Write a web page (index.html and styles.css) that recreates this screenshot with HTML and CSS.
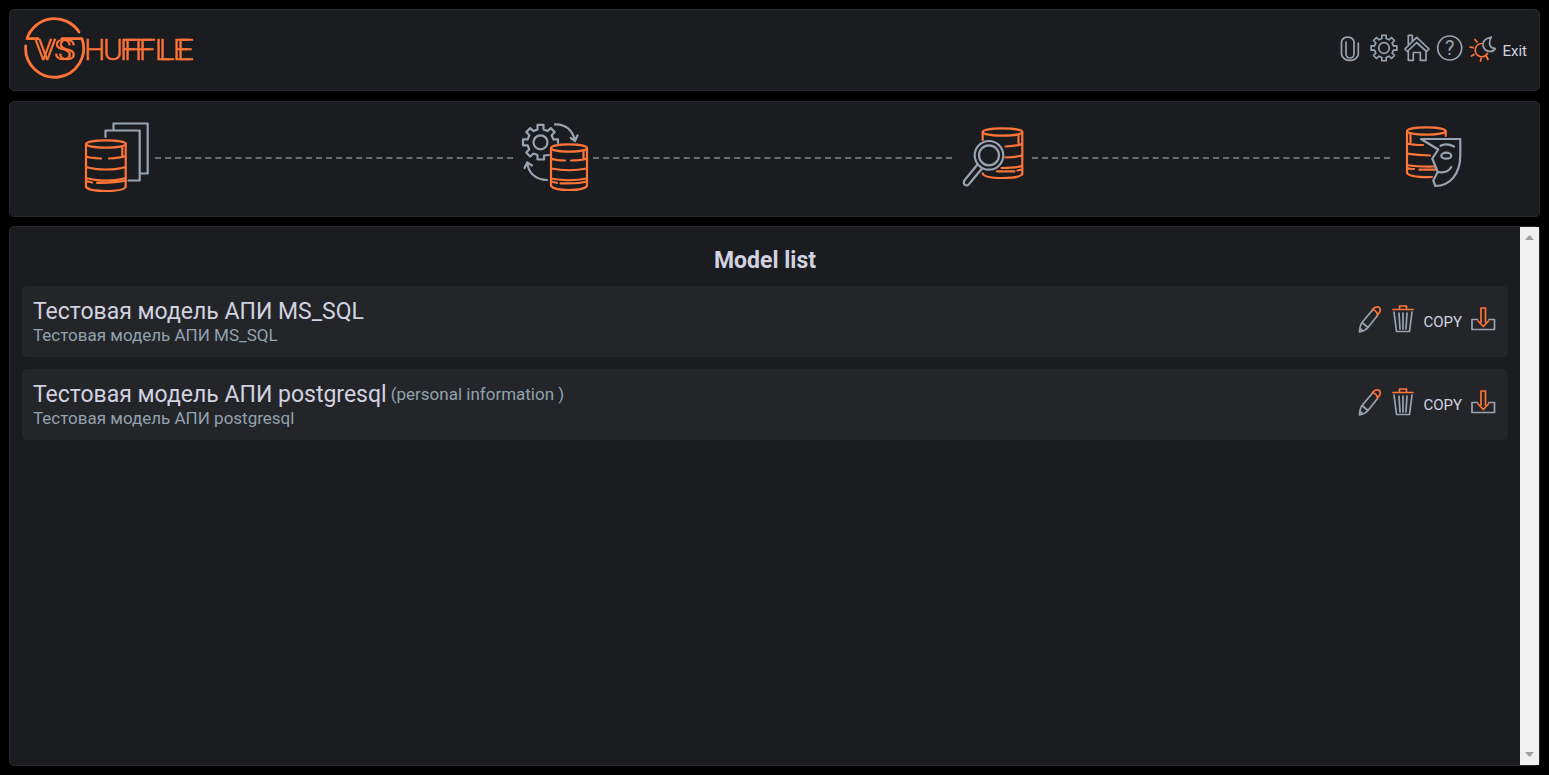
FILE: index.html
```html
<!DOCTYPE html>
<html lang="en">
<head>
<meta charset="utf-8">
<title>VSHUFFLE</title>
<meta name="viewport" content="width=device-width, initial-scale=1">
<link rel="stylesheet" href="styles.css">
</head>
<body>
<svg width="0" height="0" class="defs" aria-hidden="true">
  <defs>
    <path id="gear" d="M-3 -17.5H3V-12.9L7 -11.2L10.3 -14.4L14.4 -10.3L11.2 -7L12.9 -3H17.5V3H12.9L11.2 7L14.4 10.3L10.3 14.4L7 11.2L3 12.9V17.5H-3V12.9L-7 11.2L-10.3 14.4L-14.4 10.3L-11.2 7L-12.9 3H-17.5V-3H-12.9L-11.2 -7L-14.4 -10.3L-10.3 -14.4L-7 -11.2L-3 -12.9Z"/>
    <symbol id="pencil" viewBox="0 0 26 30">
      <path class="g" d="M16 5.500L5 18.500Q3 21 2.500 28Q8 27 11 23.500L20.500 11.500M5 18.500Q8 21 11 23.500M3 24.500L6 26.800"/>
      <path class="o" d="M15.500 5.500Q18 2.300 21.500 3Q24.500 5 22.500 8.500L20.500 11Q20 7 15.500 5.500"/>
    </symbol>
    <symbol id="trash" viewBox="0 0 22 30">
      <path class="g" d="M2 8L4.500 27.500H17.500L20 8M7 9L8 25M11 9V25M15 9L14 25"/>
      <path class="o" d="M1 5.500H21M7.500 5V2H14.500V5"/>
    </symbol>
    <symbol id="download" viewBox="0 0 26 30">
      <path class="g" d="M6.500 15.500H1V25.500H23.500V15.500H18"/>
      <path class="o" d="M10 18V4H14.500V18M7 17L12.300 22.500L17.500 17"/>
    </symbol>
  </defs>
</svg>

<header class="panel header">
  <a class="logo" href="#" aria-label="VSHUFFLE">
    <svg width="174" height="64" viewBox="22 15 174 64">
      <path class="ring" d="M38 38.700H27A29 29 0 0 1 79 32M62 38.700H82A29 29 0 1 1 25.700 46"/>
      <g class="wordmark">
        <text class="double" y="60" x="34 54">VS</text>
        <text y="60" x="84 103">HU</text>
        <text class="double" y="60" x="120 135">FF</text>
        <text class="double" y="60" x="155 173">LE</text>
      </g>
    </svg>
  </a>
  <nav class="tools">
    <button class="tool" aria-label="Attachments"><svg width="29" height="30" viewBox="1336 33 29 30"><path class="g" d="M1358.300 43V54.500A8.500 7 0 0 1 1341.500 54.500V41.500A6.500 6 0 0 1 1354 41.500V54A4 4 0 0 1 1346 54V42"/></svg></button>
    <button class="tool" aria-label="Settings"><svg width="31" height="30" viewBox="-15 -15 31 30"><use class="g" href="#gear" transform="scale(.73)"/><circle class="g" r="5.300"/></svg></button>
    <button class="tool" aria-label="Home"><svg width="28" height="30" viewBox="1404 33 28 30"><path class="g" d="M1404.900 49L1416.700 37.300L1429 49L1426.500 51.500L1416.700 42.500L1407.300 51.500ZM1408.300 45V35.300H1412.300V41M1408.300 51V60.300H1413.300V52.500H1420.300V60.300H1426V51"/></svg></button>
    <button class="tool" aria-label="Help"><svg width="28" height="30" viewBox="1436 33 28 30"><circle class="g" cx="1449.700" cy="48" r="12"/><text class="mark" x="1449.700" y="55">?</text></svg></button>
    <button class="tool" aria-label="Theme"><svg width="30" height="30" viewBox="1468 33 30 30"><path class="o" d="M1482 43.500A6.600 6.600 0 1 0 1487.500 53.500M1475 39.500L1477 42M1470 47L1473 47.700M1471.500 56L1474 54.500M1480.500 61L1481.100 58.500M1488 59.500L1486.500 56.500"/><path class="g" d="M1491.300 37Q1482.500 39 1483 45.500C1484.500 52.500 1493 53 1495.300 48.500Q1486.500 47.500 1491.300 37Z"/></svg></button>
    <a class="exit" href="#">Exit</a>
  </nav>
</header>

<nav class="panel steps" aria-label="Steps">
  <svg class="step" width="80" height="82" viewBox="75 117 80 82">
    <path class="g" d="M113.500 130V123.500H147.700V173.500H141M105.500 137V130.500H139.700V180.500H128.500"/>
    <path class="o" d="M86 144V187Q89 191 106 191T125.700 187V144M86 156.500Q90 158 101 158.500M109 158.500Q120 158 125.700 156M86 167Q94 169.500 106 169.500T125.700 167M86 178Q94 180.500 106 180.500T125.700 178M86 181L92 182.500M97 182.800Q116 183 125.700 180.500M122.300 147V155.500"/>
    <ellipse class="o" cx="106" cy="144" rx="19.800" ry="3.600"/>
  </svg>
  <span class="line"></span>
  <svg class="step" width="80" height="82" viewBox="513 117 80 82">
    <path class="g" d="M549 155L544 155.500V159.500H537.500V155L533.500 153.500L530.200 156.500L526.300 152.600L529.300 149.300L527.700 145.300H523V139.300H527.700L529.300 135.300L526.300 132L530.200 128.100L533.500 131.100L537.500 129.400V124.800H543.500V129.400L547.500 131.100L550.800 128.100L554.700 132L551.700 135.300L553.300 139.300H558V143"/>
    <circle class="g" cx="540.500" cy="142.300" r="7"/>
    <path class="g" d="M555 124.300C567 124 573 132 575 140.500M570.700 138L575 141L577.500 135.500M547 180C535 180 528 172 527.300 162.500M524.500 168L527.300 162.300L532 165.500"/>
    <path class="o" d="M551 148V186Q554 190 569 190T587 186V148M551 158.500Q556 160.500 565 160.500M571 160.500Q581 160.500 587 158.500M551 168.500Q569 172 587 168.500M551 178.500Q569 182 587 178.500M551 181.500L557 182.800M560.500 183.300Q578 184 587 181.500M583.500 151V158"/>
    <ellipse class="o" cx="569" cy="148" rx="18" ry="3.700"/>
  </svg>
  <span class="line"></span>
  <svg class="step" width="80" height="82" viewBox="952 117 80 82">
    <path class="o" d="M982.700 132V140M1022.300 132V174Q1020 178 1002.500 178Q984 178 982.700 173.500M1005.500 146.500Q1017 146 1022 144M1005.500 157.500Q1017 157 1022 155.300M1001.500 168Q1017 168 1022 165.800M997 171.300H1014.500M1017.500 170.500L1022 169.500M1018.500 135V143"/>
    <ellipse class="o" cx="1002.500" cy="132" rx="19.800" ry="3.700"/>
    <circle class="g" cx="989" cy="155.300" r="14.300"/><circle class="g" cx="989" cy="155.300" r="10"/>
    <path class="g" d="M977.500 164.500L964.300 180.500Q963 183.500 965 184.800Q967.500 186.500 969.500 183.500L982 168.500"/>
  </svg>
  <span class="line"></span>
  <svg class="step" width="80" height="82" viewBox="1390 117 80 82">
    <path class="o" d="M1407 131V173Q1409 177.500 1432 177M1445.700 131V136M1407 143.500Q1413 145 1423 145M1407 153.700Q1418 155.500 1430 155.500M1407 165Q1418 167 1435 166.500M1407 168Q1410 169 1414 169M1419.500 169.700H1435M1410.500 134V143.500"/>
    <ellipse class="o" cx="1426.300" cy="131" rx="19.300" ry="3.700"/>
    <path class="g" d="M1421 139H1460.300V155C1460.300 174 1450 186 1435.300 186L1433.300 180.500L1437.700 172L1432.300 158.500L1438.300 149.500ZM1440.500 145.800Q1446.500 142.500 1454 146.500M1437.700 172Q1447 174 1451.300 167"/>
    <ellipse class="g" cx="1446.300" cy="155.700" rx="5" ry="3"/>
  </svg>
</nav>

<main class="panel main">
  <section class="content">
    <h1 class="title">Model list</h1>
    <ul class="models">
      <li class="model">
        <div class="info">
          <div class="name">Тестовая модель АПИ MS_SQL</div>
          <div class="desc">Тестовая модель АПИ MS_SQL</div>
        </div>
        <div class="actions">
          <button class="tool icon" aria-label="Edit"><svg width="26" height="30"><use href="#pencil"/></svg></button>
          <button class="tool icon" aria-label="Delete"><svg width="22" height="30"><use href="#trash"/></svg></button>
          <button class="tool copy">COPY</button>
          <button class="tool icon" aria-label="Download"><svg width="26" height="30"><use href="#download"/></svg></button>
        </div>
      </li>
      <li class="model">
        <div class="info">
          <div class="name">Тестовая модель АПИ postgresql <span class="note">(personal information )</span></div>
          <div class="desc">Тестовая модель АПИ postgresql</div>
        </div>
        <div class="actions">
          <button class="tool icon" aria-label="Edit"><svg width="26" height="30"><use href="#pencil"/></svg></button>
          <button class="tool icon" aria-label="Delete"><svg width="22" height="30"><use href="#trash"/></svg></button>
          <button class="tool copy">COPY</button>
          <button class="tool icon" aria-label="Download"><svg width="26" height="30"><use href="#download"/></svg></button>
        </div>
      </li>
    </ul>
  </section>
  <div class="scroll" aria-hidden="true">
    <svg width="9" height="5" viewBox="0 0 9 5"><path d="M0 5L4.500 0L9 5Z"/></svg>
    <svg width="9" height="5" viewBox="0 0 9 5"><path d="M0 0L4.500 5L9 0Z"/></svg>
  </div>
</main>
</body>
</html>
```
FILE: styles.css
```css
* { box-sizing: border-box; }

body {
  margin: 0;
  padding: 9px;
  min-height: 100vh;
  display: flex;
  flex-direction: column;
  gap: 10px;
  background: #000;
  color: #d2d2e0;
  font-family: Roboto, "Liberation Sans", sans-serif;
}

svg { display: block; }
.defs { position: absolute; }

.panel {
  background: #1b1c1f;
  border: 1px solid #292a2f;
  border-radius: 5px;
}

.g, .o, .ring {
  fill: none;
  stroke: #9aa3b0;
  stroke-width: 1.7;
  stroke-linejoin: round;
  stroke-linecap: round;
}
#gear { stroke-width: 2.3; }
.o, .ring { stroke: #ff7438; }
.step .g, .step .o { stroke-width: 2.2; }
.ring { stroke-width: 2.8; }

.header {
  display: flex;
  justify-content: space-between;
  padding: 5px 12px 11px;
}
.wordmark {
  font-size: 30px;
  font-weight: 300;
  fill: #ff7438;
  stroke: #ff7438;
  stroke-width: 0.4;
}
.double { filter: drop-shadow(4px 0 0 #ff7438); }

.tools {
  display: flex;
  align-items: center;
  gap: 4px;
  padding-top: 2px;
}
.tool {
  display: flex;
  padding: 0;
  border: 0;
  background: none;
  color: inherit;
  font: inherit;
  cursor: pointer;
}
.mark {
  font-size: 20px;
  font-weight: 400;
  fill: #9aa3b0;
  text-anchor: middle;
}
.exit {
  padding-top: 6px;
  color: inherit;
  font-size: 15px;
  text-decoration: none;
}

.steps {
  display: flex;
  align-items: center;
  padding: 15px 69px 17px 65px;
}
.step { flex: none; }
.line {
  flex: 1;
  border-top: 2px dashed #6c6d70;
}

.main {
  flex: 1;
  display: flex;
  margin-top: -1px;
}
.content {
  flex: 1;
  padding: 19px 12px;
}
.title {
  margin: 0 0 10px;
  font-size: 23px;
  line-height: 30px;
  font-weight: 700;
  text-align: center;
}
.models {
  display: grid;
  gap: 12px;
  margin: 0;
  padding: 0;
  list-style: none;
}
.model {
  display: flex;
  justify-content: space-between;
  align-items: center;
  padding: 11px 11px 13px;
  border-radius: 5px;
  background: #242529;
}
.name {
  display: flex;
  align-items: center;
  gap: 4px;
  font-size: 23px;
  line-height: 30px;
}
.note, .desc {
  color: #92a2ae;
  font-size: 17px;
  line-height: 17px;
}
.note { padding-bottom: 2px; }
.actions {
  display: flex;
  align-items: center;
  gap: 9px;
}
.icon { padding-bottom: 4px; }
.tool.copy {
  padding-top: 2px;
  font-size: 15px;
}

.scroll {
  width: 19px;
  display: flex;
  flex-direction: column;
  justify-content: space-between;
  align-items: center;
  padding: 8px 0;
  background: #f0f0f0;
  fill: #a0a0a0;
}
```
